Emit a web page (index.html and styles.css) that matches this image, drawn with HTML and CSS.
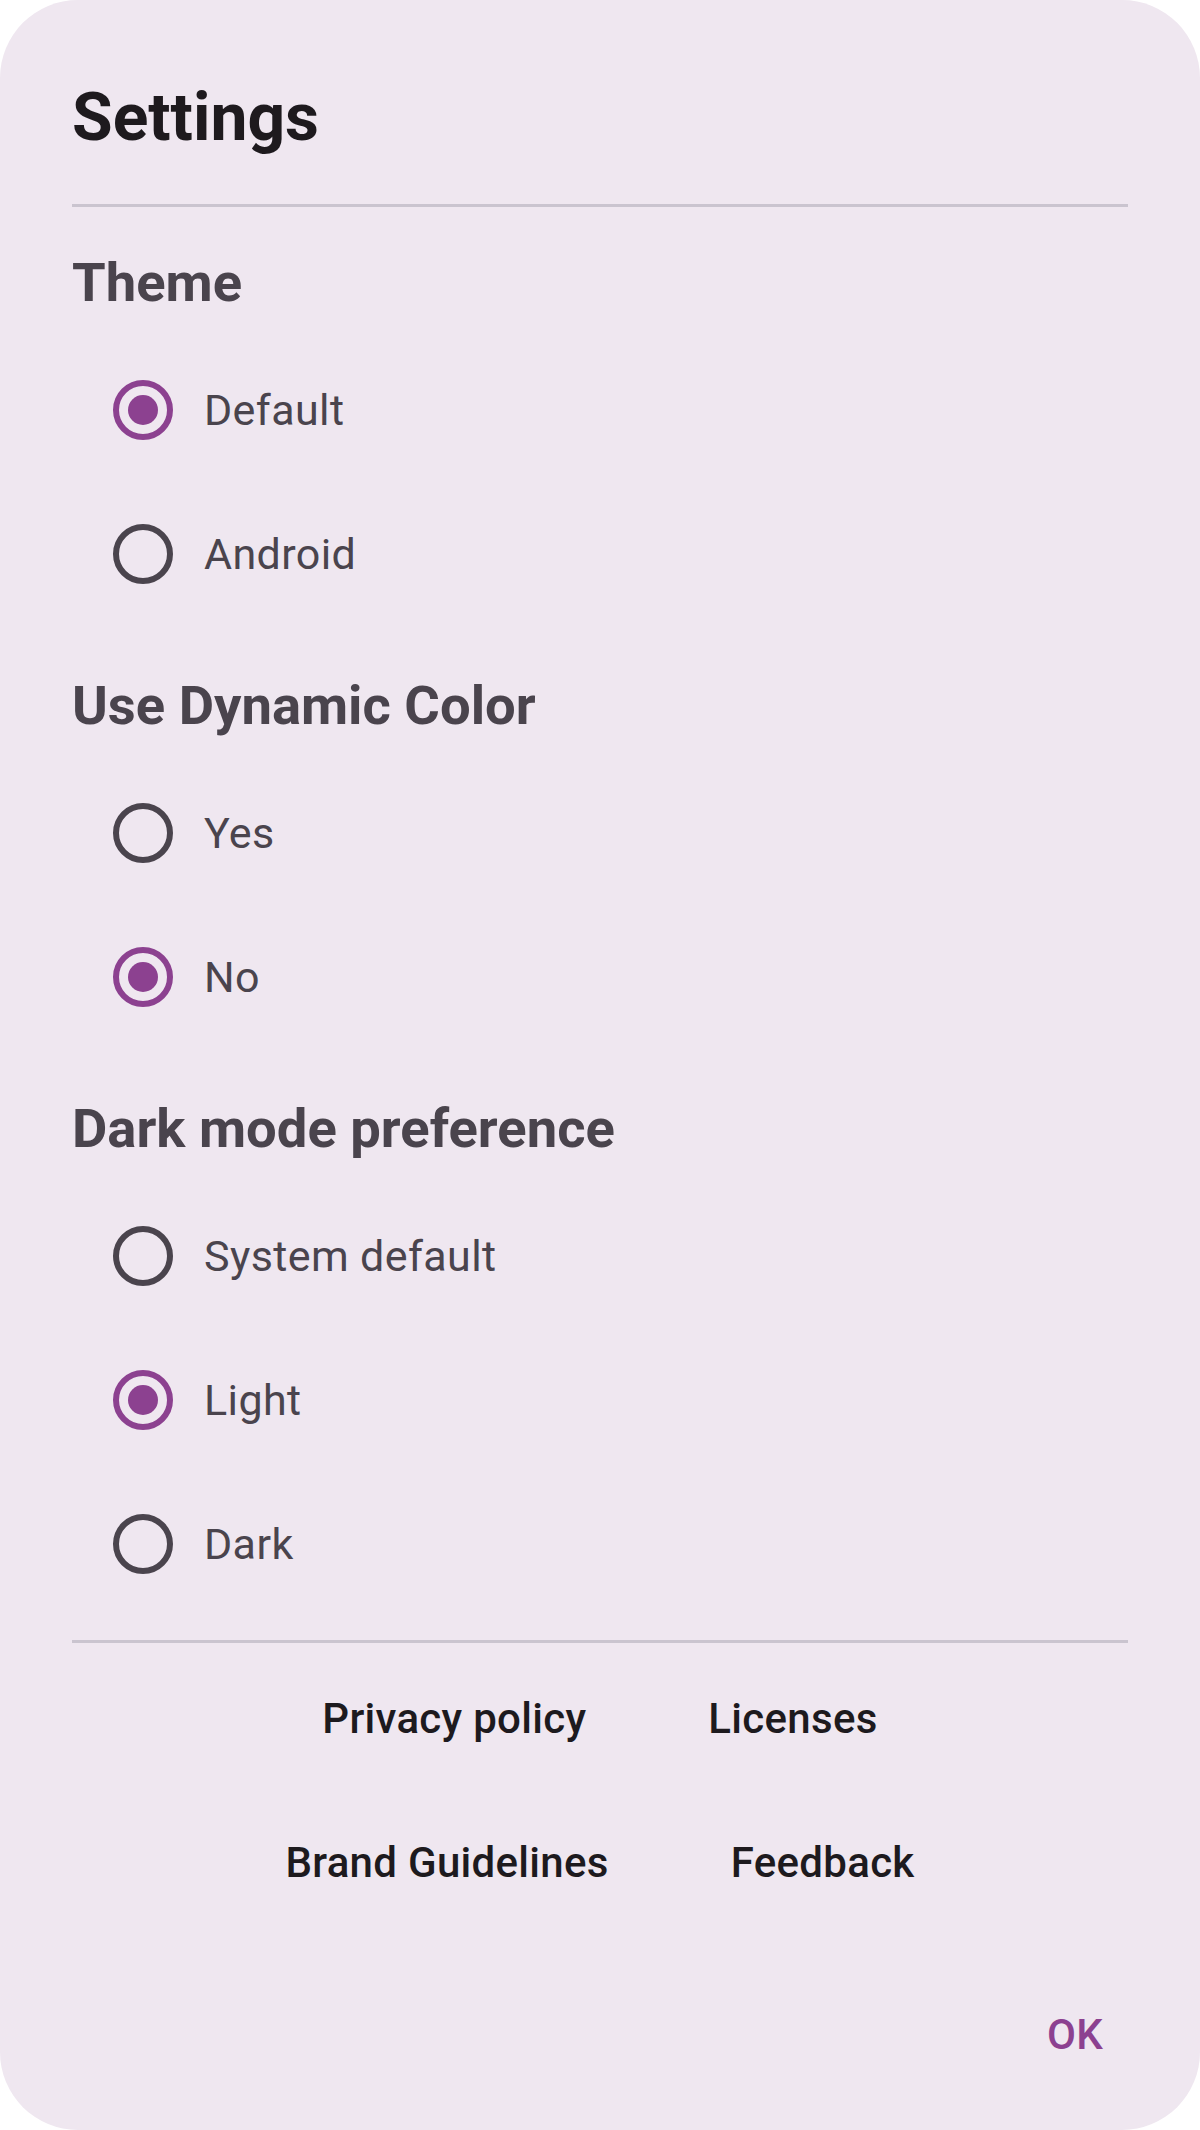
FILE: index.html
```html
<!DOCTYPE html>
<html lang="en">
<head>
<meta charset="utf-8">
<title>Settings</title>
<link rel="stylesheet" href="styles.css">
</head>
<body>
<div class="dialog">
  <h1 class="title">Settings</h1>
  <div class="divider"></div>

  <section class="section first">
    <h2 class="heading">Theme</h2>
    <div class="option"><span class="radio checked"></span><span class="label">Default</span></div>
    <div class="option"><span class="radio"></span><span class="label">Android</span></div>
  </section>

  <section class="section">
    <h2 class="heading">Use Dynamic Color</h2>
    <div class="option"><span class="radio"></span><span class="label">Yes</span></div>
    <div class="option"><span class="radio checked"></span><span class="label">No</span></div>
  </section>

  <section class="section">
    <h2 class="heading">Dark mode preference</h2>
    <div class="option"><span class="radio"></span><span class="label">System default</span></div>
    <div class="option"><span class="radio checked"></span><span class="label">Light</span></div>
    <div class="option"><span class="radio"></span><span class="label">Dark</span></div>
  </section>

  <div class="divider bottom"></div>

  <div class="links">
    <div class="link-row">
      <span class="link">Privacy policy</span>
      <span class="link">Licenses</span>
    </div>
    <div class="link-row">
      <span class="link">Brand Guidelines</span>
      <span class="link">Feedback</span>
    </div>
  </div>

  <div class="actions">
    <span class="ok">OK</span>
  </div>
</div>
</body>
</html>
```

FILE: styles.css
```css
html, body {
  margin: 0;
  padding: 0;
  background: #ffffff;
}

body {
  font-family: Roboto, "Noto Sans", "Liberation Sans", sans-serif;
}

.dialog {
  width: 1200px;
  height: 2130px;
  box-sizing: border-box;
  background: #efe7f0;
  border-radius: 78px;
  padding: 78px 72px 24px;
  display: flex;
  flex-direction: column;
}

.title {
  margin: 0;
  font-size: 66px;
  line-height: 80px;
  font-weight: 700;
  color: #1e1a1e;
}

.divider {
  height: 3px;
  background: #cac4cf;
  margin-top: 46px;
  flex: none;
}

.divider.bottom {
  margin-top: 24px;
}

.section {
  margin-top: 48px;
}

.section.first {
  margin-top: 44px;
}

.heading {
  margin: 0 0 23px;
  font-size: 54.4px;
  line-height: 64px;
  font-weight: 700;
  color: #4a444d;
}

.option {
  height: 144px;
  display: flex;
  align-items: center;
}

.radio {
  flex: none;
  width: 60px;
  height: 60px;
  box-sizing: border-box;
  border: 6px solid #4a444d;
  border-radius: 50%;
  margin-left: 41px;
  display: flex;
  align-items: center;
  justify-content: center;
}

.radio.checked {
  border-color: #8c4190;
}

.radio.checked::after {
  content: "";
  width: 30px;
  height: 30px;
  border-radius: 50%;
  background: #8c4190;
}

.label {
  margin-left: 31px;
  font-size: 43px;
  letter-spacing: 0.4px;
  color: #4a444d;
}

.links {
  margin-top: 3px;
  display: flex;
  flex-direction: column;
}

.link-row {
  height: 144px;
  display: flex;
  justify-content: center;
  align-items: center;
  gap: 50px;
}

.link {
  padding: 0 36px;
  font-size: 42px;
  font-weight: 500;
  letter-spacing: 0.3px;
  color: #1d1a1e;
}

.actions {
  margin-top: auto;
  height: 144px;
  display: flex;
  justify-content: flex-end;
  align-items: center;
}

.ok {
  padding: 0 36px;
  margin-right: -11px;
  font-size: 42px;
  font-weight: 500;
  letter-spacing: 0.3px;
  color: #8c4190;
}
```
